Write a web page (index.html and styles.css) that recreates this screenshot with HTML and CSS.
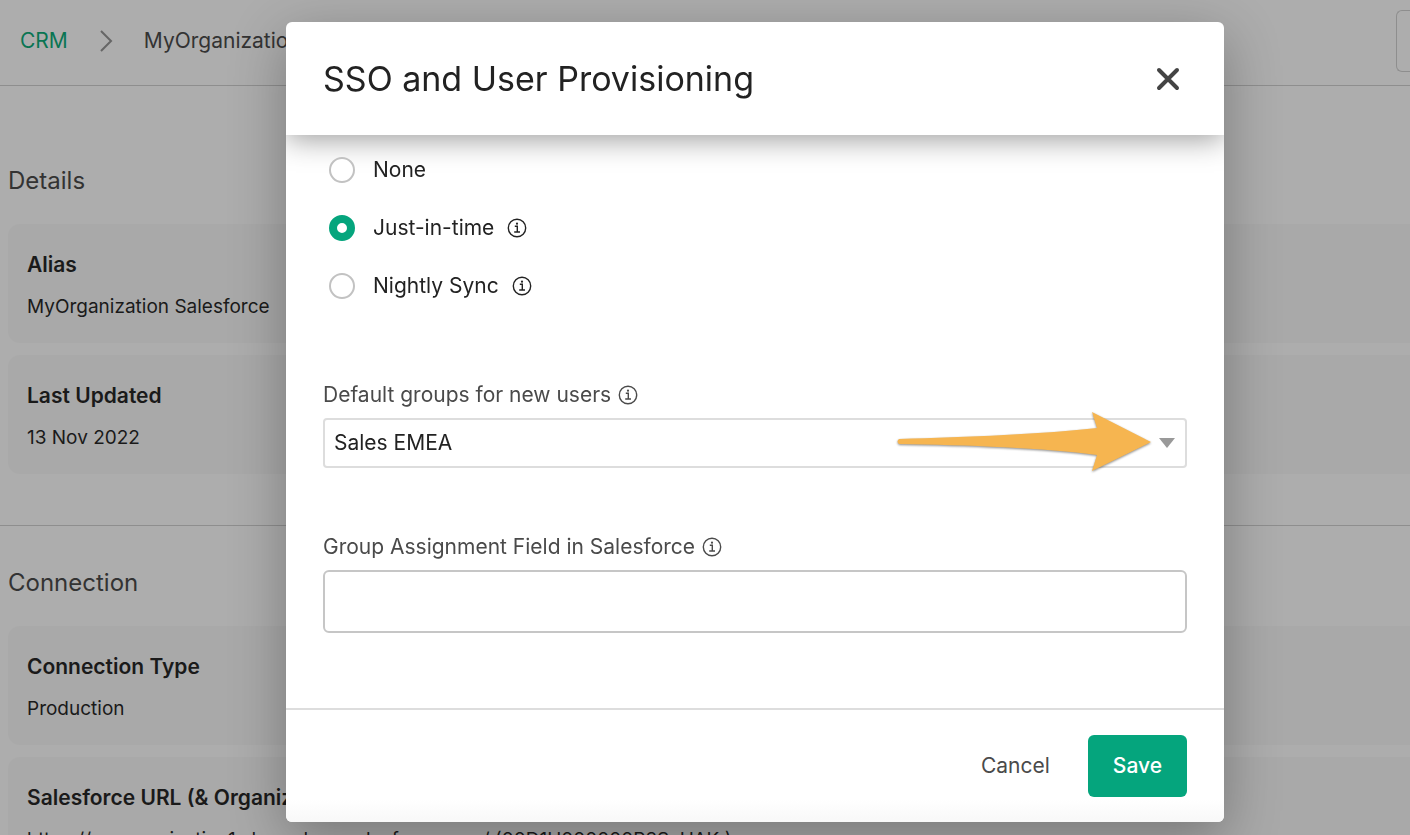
FILE: index.html
```
<!DOCTYPE html>
<html lang="en">

<head>
    <meta charset="UTF-8">
    <meta name="viewport" content="width=device-width, initial-scale=1.0">
    <link rel="stylesheet" href="styles.css">
    <title>SSO and User Provisioning</title>
</head>

<body>
    <div class="page">
        <header class="topbar">
            <nav class="breadcrumb">
                <a href="#">CRM</a>
                <svg class="chevron" viewBox="0 0 14 22"><path d="M2 1 L12 11 L2 21" /></svg>
                <span>MyOrganization Salesforce</span>
            </nav>
            <button class="topbar-button" aria-label="Actions"></button>
        </header>
        <section class="section">
            <h2>Details</h2>
            <div class="card">
                <h3>Alias</h3>
                <p>MyOrganization Salesforce</p>
            </div>
            <div class="card">
                <h3>Last Updated</h3>
                <p>13 Nov 2022</p>
            </div>
        </section>
        <section class="section section-connection">
            <h2>Connection</h2>
            <div class="card">
                <h3>Connection Type</h3>
                <p>Production</p>
            </div>
            <div class="card">
                <h3>Salesforce URL (&amp; Organization ID)</h3>
                <p>https://myorganization1-dev-ed.my.salesforce.com/ (00D1H000000P3SxUAK )</p>
            </div>
        </section>
    </div>

    <div class="overlay">
        <form class="modal" role="dialog" aria-labelledby="modalTitle">
            <div class="modal-header">
                <h1 id="modalTitle">SSO and User Provisioning</h1>
                <button type="button" class="close" aria-label="Close">
                    <svg viewBox="0 0 24 24"><path d="M3 3 L21 21 M21 3 L3 21" /></svg>
                </button>
            </div>
            <div class="modal-body">
                <div class="options">
                    <div class="option">
                        <input type="radio" name="provisioning" id="none">
                        <label for="none">None</label>
                    </div>
                    <div class="option">
                        <input type="radio" name="provisioning" id="jit" checked>
                        <label for="jit">Just-in-time</label>
                        <svg class="info" viewBox="0 0 20 20"><circle cx="10" cy="10" r="8.7" /><path d="M7.8 8.3 H10.3 V14 M7.2 14 H13" /><circle class="dot" cx="10" cy="5.7" r="1.1" /></svg>
                    </div>
                    <div class="option">
                        <input type="radio" name="provisioning" id="nightly">
                        <label for="nightly">Nightly Sync</label>
                        <svg class="info" viewBox="0 0 20 20"><circle cx="10" cy="10" r="8.7" /><path d="M7.8 8.3 H10.3 V14 M7.2 14 H13" /><circle class="dot" cx="10" cy="5.7" r="1.1" /></svg>
                    </div>
                </div>
                <div class="field">
                    <div class="field-label">
                        <label for="groups">Default groups for new users</label>
                        <svg class="info" viewBox="0 0 20 20"><circle cx="10" cy="10" r="8.7" /><path d="M7.8 8.3 H10.3 V14 M7.2 14 H13" /><circle class="dot" cx="10" cy="5.7" r="1.1" /></svg>
                    </div>
                    <div class="select-wrap">
                        <select id="groups">
                            <option>Sales EMEA</option>
                        </select>
                        <svg class="caret" viewBox="0 0 16 10"><path d="M0 0 H16 L8 10 Z" /></svg>
                        <svg class="arrow" viewBox="0 0 256 62"><path d="M3 28 C70 26 150 23 201 17 L196 1 L255 31 L196 60 L201 44 C150 37 70 34 3 33 Q0 30.500 3 28 Z" /></svg>
                    </div>
                </div>
                <div class="field">
                    <div class="field-label">
                        <label for="assignment">Group Assignment Field in Salesforce</label>
                        <svg class="info" viewBox="0 0 20 20"><circle cx="10" cy="10" r="8.7" /><path d="M7.8 8.3 H10.3 V14 M7.2 14 H13" /><circle class="dot" cx="10" cy="5.7" r="1.1" /></svg>
                    </div>
                    <input type="text" id="assignment">
                </div>
            </div>
            <div class="modal-footer">
                <button type="button" class="cancel">Cancel</button>
                <button type="submit" class="save">Save</button>
            </div>
        </form>
    </div>
</body>

</html>
```
FILE: styles.css
```
* {
    box-sizing: border-box;
}

body {
    font-family: Inter, 'Liberation Sans', sans-serif;
    font-size: 21px;
    line-height: 28px;
    margin: 0;
    height: 100vh;
    overflow: hidden;
    background-color: #adadad;
    color: #222;
}

h1, h2, h3, p {
    margin: 0;
    font-weight: 400;
}

button, input, select {
    font: inherit;
}

.page {
    height: 100vh;
    overflow: hidden;
}

.topbar {
    display: flex;
    align-items: center;
    justify-content: space-between;
    height: 86px;
    padding: 0 0 4px 20px;
    border-bottom: 1px solid #8e8e8e;
}

.breadcrumb {
    display: flex;
    align-items: center;
    color: #333;
}

.breadcrumb a {
    color: #0a7553;
    text-decoration: none;
}

.chevron {
    width: 14px;
    height: 22px;
    margin: 0 31px;
    fill: none;
    stroke: #666;
    stroke-width: 2;
}

.topbar-button {
    width: 14px;
    height: 62px;
    background: none;
    border: 1px solid #8e8e8e;
    border-right: none;
    border-radius: 6px 0 0 6px;
}

.section {
    padding: 80px 0 0 8px;
    height: 440px;
    border-bottom: 1px solid #8e8e8e;
}

.section-connection {
    padding-top: 42px;
}

.section h2 {
    font-size: 24px;
    line-height: 30px;
    margin-bottom: 28px;
    color: #333;
}

.card {
    height: 119px;
    margin-bottom: 12px;
    padding: 27px 19px;
    background-color: #a9a9a9;
    border-radius: 12px 0 0 12px;
    color: #1a1a1a;
}

.card h3 {
    font-size: 21px;
    font-weight: 600;
    margin-bottom: 14px;
}

.card p {
    font-size: 19px;
    line-height: 28px;
}

.overlay {
    position: fixed;
    inset: 0;
    padding: 22px 186px 12px 286px;
}

.modal {
    display: flex;
    flex-direction: column;
    background-color: #fff;
    border-radius: 6px;
    overflow: hidden;
    box-shadow: 0 16px 56px rgba(0, 0, 0, 0.3);
}

.modal-header {
    display: flex;
    align-items: center;
    justify-content: space-between;
    height: 113px;
    padding: 0 44px 0 37px;
    box-shadow: 0 4px 28px rgba(0, 0, 0, 0.4);
}

.modal-header h1 {
    font-size: 34px;
    line-height: 44px;
}

.close {
    display: flex;
    padding: 0;
    background: none;
    border: none;
}

.close svg {
    width: 24px;
    height: 24px;
    stroke: #444;
    stroke-width: 4;
    stroke-linecap: round;
}

.modal-body {
    padding: 20px 37px 75px;
}

.options {
    display: flex;
    flex-direction: column;
    gap: 28px;
    margin-bottom: 80px;
    padding-left: 6px;
}

.option {
    display: flex;
    align-items: center;
    height: 30px;
}

.option input {
    appearance: none;
    width: 26px;
    height: 26px;
    margin: 0 18px 0 0;
    background-color: #fff;
    border: 2px solid #c2c2c2;
    border-radius: 50%;
}

.option input:checked {
    border: 8px solid #05a57d;
}

.option .info {
    margin-left: 13px;
}

.info {
    width: 20px;
    height: 20px;
    fill: none;
    stroke: currentColor;
    stroke-width: 1.4;
}

.info .dot {
    fill: currentColor;
    stroke: none;
}

.field + .field {
    margin-top: 65px;
}

.field-label {
    display: flex;
    align-items: center;
    gap: 7px;
    margin-bottom: 9px;
    color: #4a4a4a;
}

.select-wrap {
    position: relative;
}

select {
    display: block;
    appearance: none;
    width: 100%;
    height: 50px;
    padding: 0 9px;
    background-color: #fff;
    border: 2px solid #ddd;
    border-radius: 4px;
    color: #222;
}

.caret {
    position: absolute;
    top: 20px;
    right: 12px;
    width: 16px;
    height: 10px;
    fill: #999;
}

/* pointer drawn over the select */
.arrow {
    position: absolute;
    top: -7px;
    right: 35px;
    width: 256px;
    height: 62px;
    fill: #f6b550;
    overflow: visible;
    pointer-events: none;
    filter: drop-shadow(0 1px 1px rgba(0, 0, 0, 0.45));
}

input[type="text"] {
    display: block;
    width: 100%;
    height: 63px;
    padding: 0 16px;
    border: 2px solid #c6c6c6;
    border-radius: 6px;
}

.modal-footer {
    display: flex;
    align-items: center;
    justify-content: flex-end;
    gap: 38px;
    height: 114px;
    padding: 0 37px;
    border-top: 2px solid #ddd;
    background: linear-gradient(#fff 80%, #f8f8f8);
}

.cancel {
    padding: 0;
    background: none;
    border: none;
    color: #4a4a4a;
}

.save {
    height: 62px;
    padding: 0 25px;
    background-color: #05a57d;
    border: none;
    border-radius: 6px;
    color: #fff;
    font-weight: 500;
}
```
